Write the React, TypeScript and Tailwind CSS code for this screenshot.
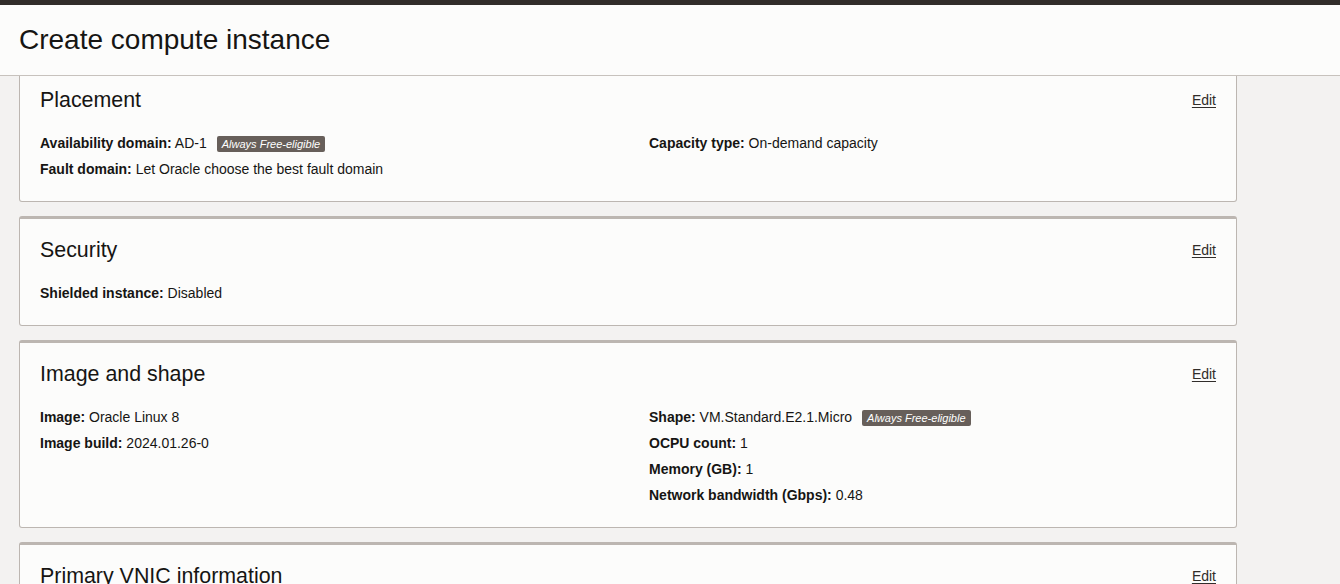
import React from "react";

type Field = { label: string; value: string; badge?: boolean };

const sections: { title: string; left: Field[]; right: Field[] }[] = [
  {
    title: "Placement",
    left: [
      { label: "Availability domain:", value: "AD-1", badge: true },
      { label: "Fault domain:", value: "Let Oracle choose the best fault domain" },
    ],
    right: [{ label: "Capacity type:", value: "On-demand capacity" }],
  },
  {
    title: "Security",
    left: [{ label: "Shielded instance:", value: "Disabled" }],
    right: [],
  },
  {
    title: "Image and shape",
    left: [
      { label: "Image:", value: "Oracle Linux 8" },
      { label: "Image build:", value: "2024.01.26-0" },
    ],
    right: [
      { label: "Shape:", value: "VM.Standard.E2.1.Micro", badge: true },
      { label: "OCPU count:", value: "1" },
      { label: "Memory (GB):", value: "1" },
      { label: "Network bandwidth (Gbps):", value: "0.48" },
    ],
  },
  {
    title: "Primary VNIC information",
    left: [
      { label: "Virtual cloud network:", value: "vcn-20240205" },
      { label: "Subnet:", value: "subnet-20240205" },
    ],
    right: [],
  },
];

function Badge() {
  return (
    <span className="ml-[10px] inline-block h-[16px] rounded-[2px] bg-[#675f5a] px-[5px] align-middle text-[11px] italic leading-[16px] text-white">
      Always Free-eligible
    </span>
  );
}

function Row({ f }: { f: Field }) {
  return (
    <div className="h-[26px] whitespace-nowrap leading-[26px]">
      <span className="font-bold">{f.label}</span> {f.value}
      {f.badge && <Badge />}
    </div>
  );
}

export default function App() {
  return (
    <div
      className="flex h-screen flex-col bg-[#f3f2f1] text-[14px] text-[#161513]"
      style={{ fontFamily: '"Liberation Sans", Arial, sans-serif' }}
    >
      <div className="h-[5px] bg-[#312d2a]" />
      <header className="flex h-[71px] items-center border-b border-[#c7c2bd] bg-[#fcfcfb] px-[19px]">
        <h1 className="text-[28px] leading-[32px]">Create compute instance</h1>
      </header>
      <main className="flex-1 overflow-hidden pl-[19px]">
        <div className="-mt-[10px] flex w-[1218px] flex-col gap-[14px]">
          {sections.map((s) => (
            <section
              key={s.title}
              className="rounded-[3px] border border-t-[3px] border-[#bcb6b1] bg-[#fcfcfb] px-[20px] pb-[19px] pt-[19px]"
            >
              <div className="flex h-[24px] items-center justify-between">
                <h2 className="text-[21.4px] leading-[24px]">{s.title}</h2>
                <a href="#" className="text-[14px] text-[#312d2a] underline underline-offset-2">
                  Edit
                </a>
              </div>
              <div className="mt-[18px] grid grid-cols-[609px_1fr]">
                <div>
                  {s.left.map((f) => (
                    <Row key={f.label} f={f} />
                  ))}
                </div>
                <div>
                  {s.right.map((f) => (
                    <Row key={f.label} f={f} />
                  ))}
                </div>
              </div>
            </section>
          ))}
        </div>
      </main>
    </div>
  );
}
